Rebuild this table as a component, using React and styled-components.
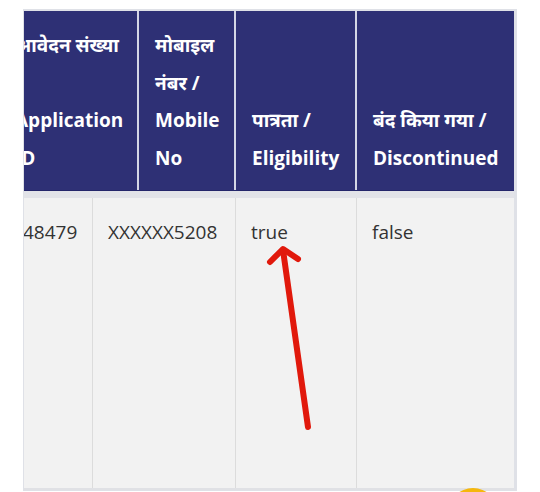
import styled, { createGlobalStyle } from "styled-components";

const GlobalStyle = createGlobalStyle`
  html, body {
    margin: 0;
    padding: 0;
    background: #ffffff;
    overflow: hidden;
  }
  body {
    font-family: "Open Sans", "Noto Sans", "DejaVu Sans", sans-serif;
  }
`;

const headers = [
  ["आवेदन संख्या", "/", "Application", "ID"],
  ["मोबाइल", "नंबर /", "Mobile", "No"],
  ["पात्रता /", "Eligibility"],
  ["बंद किया गया /", "Discontinued"],
];

const row = ["48479", "XXXXXX5208", "true", "false"];

const App = () => {
  return (
    <>
      <GlobalStyle />
      <Page>
        <TableFrame>
          <HeadGrid>
            {headers.map((lines, i) => (
              <HeadCell key={i}>
                {lines.map((line, j) => (
                  <span key={j}>{line}</span>
                ))}
              </HeadCell>
            ))}
          </HeadGrid>
          <Divider />
          <BodyGrid>
            {row.map((value, i) => (
              <BodyCell key={i}>{value}</BodyCell>
            ))}
          </BodyGrid>
        </TableFrame>
        <Arrow viewBox="0 0 540 492" width="540" height="492">
          <g
            stroke="#e1190c"
            strokeWidth="6"
            strokeLinecap="round"
            strokeLinejoin="round"
            fill="none"
          >
            <path d="M308 427 L283 250" />
            <path d="M270 262 L283 249 L298 259" />
          </g>
        </Arrow>
        <FloatButton />
      </Page>
    </>
  );
};

const Page = styled.div`
  position: relative;
  width: 540px;
  height: 492px;
  padding: 9px 0 0 23px;
  box-sizing: border-box;
  overflow: hidden;
`;

const TableFrame = styled.div`
  width: 494px;
  height: 482px;
  box-sizing: border-box;
  border: 1px solid #dfe1e7;
  border-top-width: 2px;
  border-right-width: 3px;
  background: #f2f2f2;
  overflow: hidden;
  display: flex;
  flex-direction: column;
`;

const HeadGrid = styled.div`
  display: grid;
  grid-template-columns: 138px 95px 119px 157px;
  column-gap: 2px;
  margin-left: -25px;
  height: 179px;
  background: #d4d6e6;
  border-bottom: 1px solid #24266a;
`;

const HeadCell = styled.div`
  background: #2e3075;
  color: #ffffff;
  font-weight: 700;
  font-size: 19px;
  line-height: 37.5px;
  padding: 0 12px 13px 16px;
  display: flex;
  flex-direction: column;
  justify-content: flex-end;
  white-space: nowrap;
`;

const Divider = styled.div`
  height: 7px;
  background: #e2e3e8;
`;

const BodyGrid = styled.div`
  flex: 1;
  display: grid;
  grid-template-columns: 84px 142px 120px 157px;
  column-gap: 1px;
  margin-left: -16px;
  background: #dcdcdc;
  border-bottom: 2px solid #e0e1e5;
`;

const BodyCell = styled.div`
  background: #f2f2f2;
  color: #333333;
  font-size: 19px;
  line-height: 28px;
  padding: 20px 15px;
  white-space: nowrap;
`;

const Arrow = styled.svg`
  position: absolute;
  left: 0;
  top: 0;
  pointer-events: none;
`;

const FloatButton = styled.div`
  position: absolute;
  left: 448px;
  top: 488px;
  width: 50px;
  height: 50px;
  border-radius: 50%;
  background: #f5b70d;
`;

export default App;
